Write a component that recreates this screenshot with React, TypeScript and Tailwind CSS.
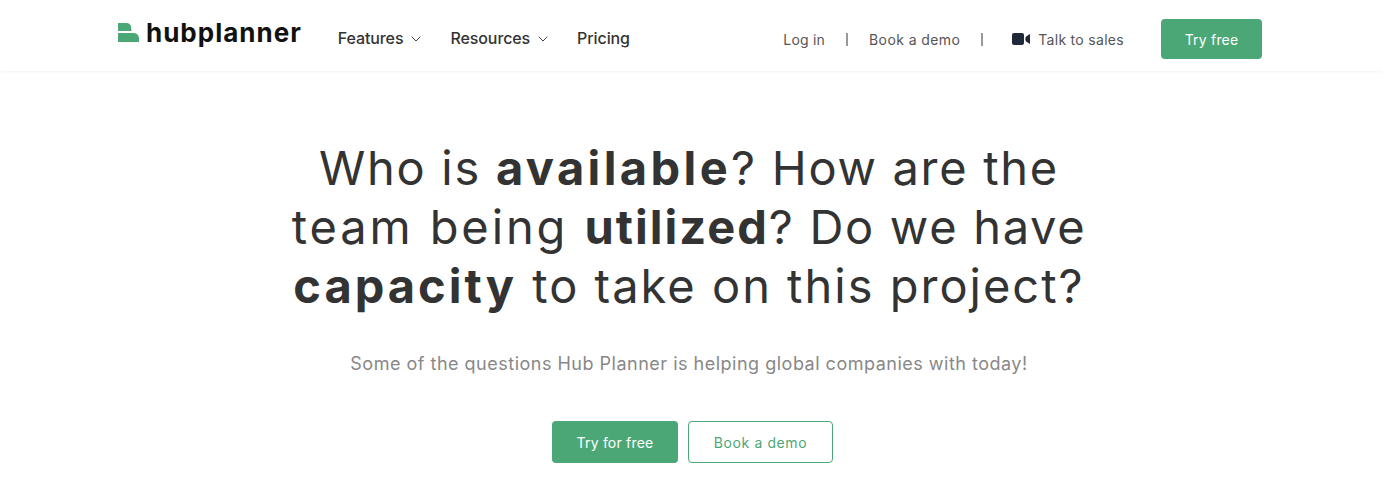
import React from "react";
import { ChevronDown } from "lucide-react";

const font = { fontFamily: '"Inter", "Liberation Sans", sans-serif' };

function Logo() {
  return (
    <div className="flex items-center">
      <svg width="21" height="20" viewBox="0 0 21 20" className="mr-[7px]">
        <path d="M0 0h8.5c2.5 0 4 1.5 4.5 3.5L13.500 8H0z" fill="#4ca777" />
        <path d="M0 10h15c3.500 0 5.500 1.800 6 5v4H0z" fill="#4ca777" />
      </svg>
      <span className="text-[26px] leading-[30px] font-bold tracking-[1px] text-[#111]">hubplanner</span>
    </div>
  );
}

function NavItem({ label, caret }: { label: string; caret?: boolean }) {
  return (
    <a className="flex items-center text-[16px] font-medium tracking-[-0.1px] text-[#333]">
      {label}
      {caret && <ChevronDown className="ml-[5px] mt-[2px] h-[16px] w-[16px] text-[#444]" strokeWidth={1.5} />}
    </a>
  );
}

function VideoIcon() {
  return (
    <svg width="18" height="12" viewBox="0 0 18 12" className="block">
      <rect x="0" y="0" width="12" height="12" rx="2" fill="#1f2937" />
      <path d="M18 1v10l-3.500-2.200C13 8 13 4 14.500 3.200z" fill="#1f2937" />
    </svg>
  );
}

export default function App() {
  return (
    <div className="h-[496px] bg-white" style={font}>
      <header className="flex h-[71px] items-center bg-white pl-[118px] pr-[121px] shadow-[0_1px_3px_rgba(0,0,0,0.05)]">
        <div className="-mt-[6px]">
          <Logo />
        </div>
        <nav className="ml-[36px] flex items-center gap-[26px] mt-[4px]">
          <NavItem label="Features" caret />
          <NavItem label="Resources" caret />
          <NavItem label="Pricing" />
        </nav>
        <div className="ml-auto mt-[7px] flex items-center text-[14px] tracking-[0.2px] text-[#555]">
          <a>Log in</a>
          <span className="mx-[21px] h-[13px] w-[2px] bg-[#999]" />
          <a className="tracking-[0.4px]">Book a demo</a>
          <span className="mx-[21px] h-[13px] w-[2px] bg-[#999]" />
          <span className="ml-[8px] mr-[8px]">
            <VideoIcon />
          </span>
          <a className="tracking-[0.3px]">Talk to sales</a>
          <a className="ml-[37px] flex h-[40px] w-[101px] items-center justify-center rounded-[4px] bg-[#4ca777] text-white">
            Try free
          </a>
        </div>
      </header>

      <main className="flex flex-col items-center">
        <h1 className="mt-[67px] mr-[5px] text-center text-[47px] leading-[59px] font-normal tracking-[1.7px] text-[#333]">
          Who is <strong className="font-bold tracking-[3.4px]">available</strong>? How are the
          <br />
          <span className="tracking-[2.9px]">team being </span>
          <strong className="font-bold tracking-[2px]">utilized</strong>? Do we have
          <br />
          <strong className="font-bold tracking-[3px]">capacity</strong>
          <span className="tracking-[2px]"> to take on this project?</span>
        </h1>
        <p className="mt-[35px] mr-[5px] text-[18px] leading-[28px] tracking-[0.5px] text-[#888]">
          Some of the questions Hub Planner is helping global companies with today!
        </p>
        <div className="mt-[43px] ml-[2px] flex gap-[10px] text-[14px] tracking-[0.2px]">
          <a className="flex h-[42px] w-[126px] items-center justify-center rounded-[4px] bg-[#4ca777] text-white">
            Try for free
          </a>
          <a className="flex h-[42px] w-[145px] items-center justify-center rounded-[4px] border border-[#4ca777] tracking-[0.6px] text-[#4ca777]">
            Book a demo
          </a>
        </div>
      </main>
    </div>
  );
}
